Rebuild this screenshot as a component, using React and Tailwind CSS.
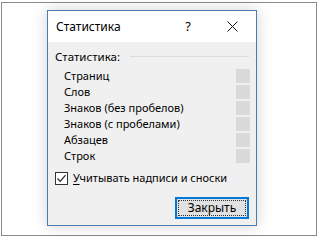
export default function App() {
  const rows = [
    "Страниц",
    "Слов",
    "Знаков (без пробелов)",
    "Знаков (с пробелами)",
    "Абзацев",
    "Строк",
  ];

  return (
    <div
      className="w-[320px] h-[240px] bg-white pt-[2px] pl-[1px] overflow-hidden"
      style={{ fontFamily: '"Noto Sans", "DejaVu Sans", sans-serif' }}
    >
      <div className="w-[316px] h-[234px] border border-[#8a8a8a] pt-[7px] pl-[45px]">
        <div className="w-[210px] h-[216px] border border-[#4d7cb3] bg-[#f0f0f0] shadow-[0_0_14px_rgba(0,0,0,0.18)] flex flex-col">
          {/* title bar */}
          <div className="h-[31px] bg-white flex items-center pl-[8px] text-[12px] text-black">
            <span className="flex-1">Статистика</span>
            <span className="w-[20px] text-center text-[13px]">?</span>
            <svg className="ml-[29px] mr-[18px]" width="11" height="11" viewBox="0 0 11 11">
              <path d="M0.5 0.5L10.5 10.5M10.5 0.5L0.5 10.5" stroke="#111" strokeWidth="1" />
            </svg>
          </div>

          {/* body */}
          <div className="flex-1 flex flex-col pl-[7px] pr-[7px] pt-[6px] text-[11px] text-black">
            <div className="flex items-center h-[17px] text-[11.5px]">
              <span>Статистика:</span>
              <div className="flex-1 ml-[10px] h-px bg-[#dcdcdc]" />
            </div>
            <div className="flex flex-col mt-[3px]">
              {rows.map((r) => (
                <div key={r} className="flex items-center h-[16px] pl-[9px]">
                  <span className="flex-1">{r}</span>
                  <div className="w-[14px] h-[14px] bg-[#dadada] mr-[-1px]" />
                </div>
              ))}
            </div>
            <div className="flex items-center mt-[6px] h-[16px]">
              <div className="w-[13px] h-[13px] border border-[#333] bg-white flex items-center justify-center">
                <svg width="11" height="11" viewBox="0 0 11 11">
                  <path d="M1.5 5.5L4.2 8.3L9.5 2.2" stroke="#222" strokeWidth="1.2" fill="none" />
                </svg>
              </div>
              <span className="ml-[5px] text-[11px]">
                <span className="underline underline-offset-2">У</span>читывать надписи и сноски
              </span>
            </div>
            <div className="flex justify-end mt-[11px]">
              <div className="w-[74px] h-[22px] border-2 border-[#0078d7] bg-[#e1e1e1] p-px">
                <div className="w-full h-full border border-dotted border-[#333] flex items-center justify-center text-[12px]">
                  Закрыть
                </div>
              </div>
            </div>
          </div>
        </div>
      </div>
    </div>
  );
}
